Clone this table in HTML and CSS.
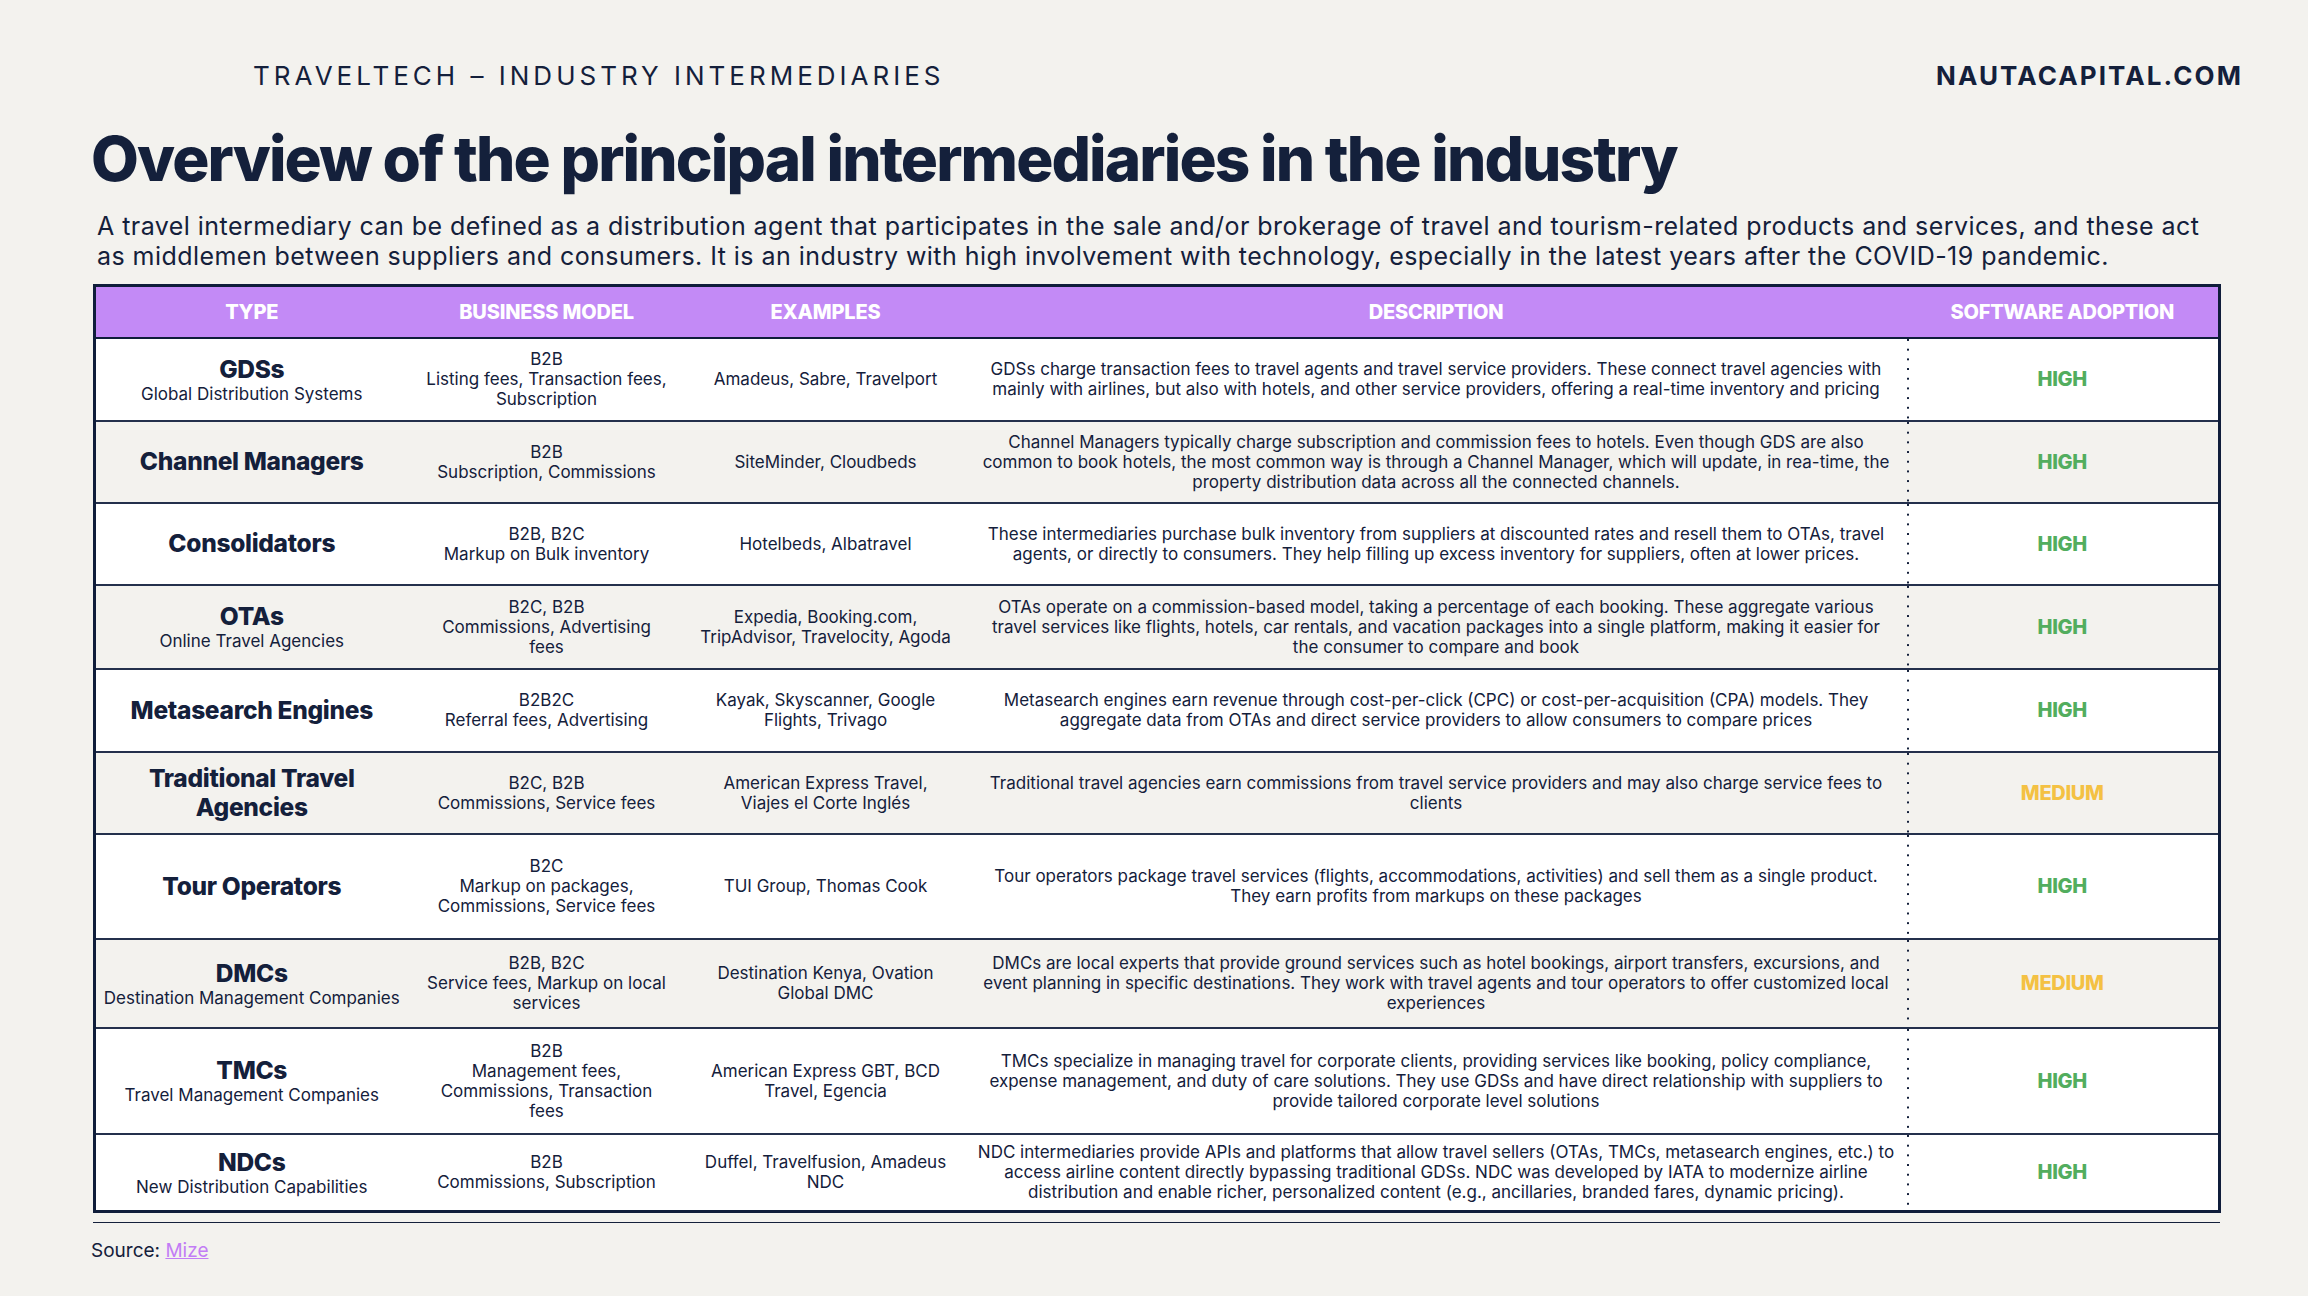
FILE: index.html
```html
<!DOCTYPE html>
<html lang="en">
<head>
<meta charset="utf-8">
<title>Traveltech – Industry Intermediaries</title>
<link rel="stylesheet" href="styles.css">
</head>
<body>
<div class="page">
  <header class="topbar">
    <span class="kicker">TRAVELTECH – INDUSTRY INTERMEDIARIES</span>
    <span class="brand">NAUTACAPITAL.COM</span>
  </header>
  <h1 class="title">Overview of the principal intermediaries in the industry</h1>
  <p class="lead">A travel intermediary can be defined as a distribution agent that participates in the sale and/or brokerage of travel and tourism-related products and services, and these act<br>as middlemen between suppliers and consumers. It is an industry with high involvement with technology, especially in the latest years after the COVID-19 pandemic.</p>

  <table class="grid">
    <colgroup>
      <col class="c-type"><col class="c-model"><col class="c-ex"><col class="c-desc"><col class="c-adopt">
    </colgroup>
    <thead>
      <tr class="head">
        <th>TYPE</th><th>BUSINESS MODEL</th><th>EXAMPLES</th><th>DESCRIPTION</th><th>SOFTWARE ADOPTION</th>
      </tr>
    </thead>
    <tbody>
      <tr class="row w h83">
        <td class="type"><div class="tname">GDSs</div><div class="tsub">Global Distribution Systems</div></td>
        <td>B2B<br>Listing fees, Transaction fees,<br>Subscription</td>
        <td>Amadeus, Sabre, Travelport</td>
        <td class="desc">GDSs charge transaction fees to travel agents and travel service providers. These connect travel agencies with<br>mainly with airlines, but also with hotels, and other service providers, offering a real-time inventory and pricing</td>
        <td class="adopt high">HIGH</td>
      </tr>
      <tr class="row b h82">
        <td class="type"><div class="tname">Channel Managers</div></td>
        <td>B2B<br>Subscription, Commissions</td>
        <td>SiteMinder, Cloudbeds</td>
        <td class="desc">Channel Managers typically charge subscription and commission fees to hotels. Even though GDS are also<br>common to book hotels, the most common way is through a Channel Manager, which will update, in rea-time, the<br>property distribution data across all the connected channels.</td>
        <td class="adopt high">HIGH</td>
      </tr>
      <tr class="row w h82">
        <td class="type"><div class="tname">Consolidators</div></td>
        <td>B2B, B2C<br>Markup on Bulk inventory</td>
        <td>Hotelbeds, Albatravel</td>
        <td class="desc">These intermediaries purchase bulk inventory from suppliers at discounted rates and resell them to OTAs, travel<br>agents, or directly to consumers. They help filling up excess inventory for suppliers, often at lower prices.</td>
        <td class="adopt high">HIGH</td>
      </tr>
      <tr class="row b h84">
        <td class="type"><div class="tname">OTAs</div><div class="tsub">Online Travel Agencies</div></td>
        <td>B2C, B2B<br>Commissions, Advertising<br>fees</td>
        <td>Expedia, Booking.com,<br>TripAdvisor, Travelocity, Agoda</td>
        <td class="desc">OTAs operate on a commission-based model, taking a percentage of each booking. These aggregate various<br>travel services like flights, hotels, car rentals, and vacation packages into a single platform, making it easier for<br>the consumer to compare and book</td>
        <td class="adopt high">HIGH</td>
      </tr>
      <tr class="row w h83">
        <td class="type"><div class="tname">Metasearch Engines</div></td>
        <td>B2B2C<br>Referral fees, Advertising</td>
        <td>Kayak, Skyscanner, Google<br>Flights, Trivago</td>
        <td class="desc">Metasearch engines earn revenue through cost-per-click (CPC) or cost-per-acquisition (CPA) models. They<br>aggregate data from OTAs and direct service providers to allow consumers to compare prices</td>
        <td class="adopt high">HIGH</td>
      </tr>
      <tr class="row b h82">
        <td class="type"><div class="tname">Traditional Travel<br>Agencies</div></td>
        <td>B2C, B2B<br>Commissions, Service fees</td>
        <td>American Express Travel,<br>Viajes el Corte Inglés</td>
        <td class="desc">Traditional travel agencies earn commissions from travel service providers and may also charge service fees to<br>clients</td>
        <td class="adopt medium">MEDIUM</td>
      </tr>
      <tr class="row w h105">
        <td class="type"><div class="tname">Tour Operators</div></td>
        <td>B2C<br>Markup on packages,<br>Commissions, Service fees</td>
        <td>TUI Group, Thomas Cook</td>
        <td class="desc">Tour operators package travel services (flights, accommodations, activities) and sell them as a single product.<br>They earn profits from markups on these packages</td>
        <td class="adopt high">HIGH</td>
      </tr>
      <tr class="row b h89">
        <td class="type"><div class="tname">DMCs</div><div class="tsub">Destination Management Companies</div></td>
        <td>B2B, B2C<br>Service fees, Markup on local<br>services</td>
        <td>Destination Kenya, Ovation<br>Global DMC</td>
        <td class="desc">DMCs are local experts that provide ground services such as hotel bookings, airport transfers, excursions, and<br>event planning in specific destinations. They work with travel agents and tour operators to offer customized local<br>experiences</td>
        <td class="adopt medium">MEDIUM</td>
      </tr>
      <tr class="row w h106">
        <td class="type"><div class="tname">TMCs</div><div class="tsub">Travel Management Companies</div></td>
        <td>B2B<br>Management fees,<br>Commissions, Transaction<br>fees</td>
        <td>American Express GBT, BCD<br>Travel, Egencia</td>
        <td class="desc">TMCs specialize in managing travel for corporate clients, providing services like booking, policy compliance,<br>expense management, and duty of care solutions. They use GDSs and have direct relationship with suppliers to<br>provide tailored corporate level solutions</td>
        <td class="adopt high">HIGH</td>
      </tr>
      <tr class="row w h78">
        <td class="type"><div class="tname">NDCs</div><div class="tsub">New Distribution Capabilities</div></td>
        <td>B2B<br>Commissions, Subscription</td>
        <td>Duffel, Travelfusion, Amadeus<br>NDC</td>
        <td class="desc">NDC intermediaries provide APIs and platforms that allow travel sellers (OTAs, TMCs, metasearch engines, etc.) to<br>access airline content directly bypassing traditional GDSs. NDC was developed by IATA to modernize airline<br>distribution and enable richer, personalized content (e.g., ancillaries, branded fares, dynamic pricing).</td>
        <td class="adopt high">HIGH</td>
      </tr>
    </tbody>
  </table>

  <div class="rule"></div>
  <p class="source">Source: <a class="src-link" href="#">Mize</a></p>
</div>
</body>
</html>
```
FILE: styles.css
```css
* {
  box-sizing: border-box;
}

html, body {
  margin: 0;
  padding: 0;
}

body {
  background: #f3f2ee;
  color: #14203b;
  font-family: Inter, "Liberation Sans", Arial, sans-serif;
}

.page {
  width: 2308px;
  height: 1296px;
  padding: 60px 0 0 93px;
  display: flex;
  flex-direction: column;
  align-items: flex-start;
}

.topbar {
  width: 2150px;
  height: 32px;
  display: flex;
  justify-content: space-between;
  align-items: center;
  padding-left: 160px;
  font-size: 26px;
  line-height: 32px;
}

.kicker {
  font-weight: 400;
  letter-spacing: 4px;
}

.brand {
  font-weight: 700;
  letter-spacing: 2.1px;
}

.title {
  margin: 36px 0 0 -2px;
  font-size: 62px;
  line-height: 62px;
  font-weight: 800;
  letter-spacing: -1.9px;
  white-space: nowrap;
}

.lead {
  margin: 21px 0 0 4px;
  width: 2140px;
  font-size: 25px;
  line-height: 30px;
  letter-spacing: 0.45px;
  white-space: nowrap;
}

.grid {
  margin-top: 13px;
  width: 2125px;
  table-layout: fixed;
  border-collapse: collapse;
  border: 3px solid #0f1d3a;
  background: #ffffff;
}

.c-type { width: 313px; }
.c-model { width: 278px; }
.c-ex { width: 280px; }
.c-desc { width: 941px; }
.c-adopt { width: 313px; }

.head th {
  height: 52px;
  padding: 0 4px;
  background: #c38af6;
  color: #ffffff;
  font-size: 20px;
  font-weight: 800;
  letter-spacing: -0.2px;
  text-align: center;
  vertical-align: middle;
  border-bottom: 2px solid #0f1d3a;
  white-space: nowrap;
}

.row td {
  padding: 0 6px;
  text-align: center;
  vertical-align: middle;
  font-size: 17px;
  line-height: 20px;
  border-top: 2px solid #24304c;
  white-space: nowrap;
}

.row.w td { background-color: #ffffff; }
.row.b td { background-color: #f3f2ee; }

.h78 { height: 78px; }
.h82 { height: 82px; }
.h83 { height: 83px; }
.h84 { height: 84px; }
.h89 { height: 89px; }
.h105 { height: 105px; }
.h106 { height: 106px; }

.tname {
  font-size: 24.5px;
  line-height: 29px;
  font-weight: 800;
  letter-spacing: -0.3px;
}

.tsub {
  font-size: 17px;
  line-height: 20px;
}

.row td.desc {
  padding: 0 6px;
}

.row td.adopt {
  font-size: 20px;
  font-weight: 800;
  letter-spacing: -0.3px;
  background-image: linear-gradient(to bottom, #14203b 0, #14203b 2px, transparent 2px);
  background-size: 2px 9.7px;
  background-repeat: repeat-y;
  background-position: 0 0;
}

.high { color: #52ad5e; }
.medium { color: #f4c143; }

.rule {
  margin-top: 9px;
  width: 2127px;
  height: 1px;
  background: #14203b;
}

.source {
  margin: 16px 0 0 -2px;
  font-size: 19px;
  line-height: 24px;
}

.src-link {
  color: #c27cf5;
  text-decoration: underline;
}
```
